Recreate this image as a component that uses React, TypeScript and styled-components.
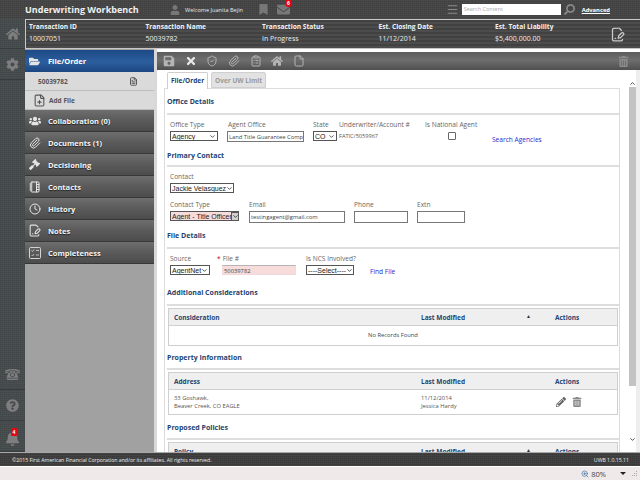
import * as React from "react";
import styled, { createGlobalStyle } from "styled-components";
import {
  FaBell,
  FaBookmark,
  FaCog,
  FaEnvelope,
  FaFolderOpen,
  FaGavel,
  FaHome,
  FaPencilAlt,
  FaQuestionCircle,
  FaSave,
  FaSearch,
  FaTimes,
  FaTrashAlt,
  FaUser,
  FaUsers,
} from "react-icons/fa";
import { GiRotaryPhone } from "react-icons/gi";
import {
  ChevronDown,
  ChevronUp,
  ClipboardList,
  Clock,
  File,
  FilePlus,
  FileSignature,
  FileText,
  Menu,
  NotebookTabs,
  Paperclip,
  ShieldCheck,
  ZoomIn,
} from "lucide-react";

const GlobalStyle = createGlobalStyle`
  html, body {
    margin: 0;
    padding: 0;
    width: 640px;
    height: 480px;
    overflow: hidden;
    background: #fff;
  }
  * {
    box-sizing: border-box;
  }
  body {
    font-family: "Open Sans", "Liberation Sans", sans-serif;
    font-size: 8px;
  }
`;

const dither = `
  repeating-linear-gradient(0deg, rgba(255,255,255,0.035) 0 1px, transparent 1px 2px),
  repeating-linear-gradient(90deg, rgba(0,0,0,0.06) 0 1px, transparent 1px 2px)
`;

const Page = styled.div`
  width: 640px;
  height: 480px;
  display: flex;
  flex-direction: column;
  overflow: hidden;
`;

const TopBar = styled.div`
  height: 19px;
  flex: none;
  display: flex;
  align-items: center;
  padding-left: 25px;
  color: #fff;
  background: ${dither}, #444;
`;

const AppTitle = styled.div`
  font-size: 9px;
  font-weight: 700;
  width: 145px;
  color: #f0f0f0;
`;

const Welcome = styled.div`
  display: flex;
  align-items: center;
  gap: 5px;
  width: 88px;
  font-size: 5.6px;
  color: #e8e8e8;
`;

const TopIcon = styled.div`
  position: relative;
  display: flex;
  width: 19px;
  color: #777;
`;

const MailBadge = styled.span`
  position: absolute;
  left: 8px;
  top: -4px;
  width: 7px;
  height: 8px;
  border-radius: 4px;
  background: #e30613;
  color: #fff;
  font-size: 5px;
  font-weight: 700;
  line-height: 8px;
  text-align: center;
`;

const SearchArea = styled.div`
  margin-left: auto;
  display: flex;
  align-items: center;
  padding-right: 30px;
  color: #888;
`;

const SearchInput = styled.div`
  width: 99px;
  height: 11px;
  margin: 0 3px 0 3px;
  padding-left: 2px;
  background: #fff;
  color: #aaa;
  font-size: 5.5px;
  line-height: 11px;
`;

const MirroredIcon = styled.span`
  display: flex;
  transform: scaleX(-1);
`;

const AdvancedLink = styled.a`
  margin-left: 7px;
  font-size: 5.8px;
  font-weight: 700;
  color: #fff;
  text-decoration: underline;
`;

const Middle = styled.div`
  flex: 1;
  min-height: 0;
  display: flex;
`;

const Rail = styled.div`
  width: 25px;
  flex: none;
  display: flex;
  flex-direction: column;
  background: ${dither}, #454a4c;
`;

const RailButton = styled.div<{ $tall?: boolean; $low?: boolean }>`
  position: relative;
  height: ${(p) => (p.$tall ? 31 : 30)}px;
  padding-top: ${(p) => (p.$low ? 4 : 0)}px;
  flex: none;
  display: flex;
  align-items: center;
  justify-content: center;
  color: #7e7e7e;
  border-bottom: 1px solid #3a3d3f;
`;

const RailSpacer = styled.div`
  flex: 1;
`;

const BellBadge = styled.span`
  position: absolute;
  left: 11px;
  top: 7px;
  width: 6px;
  height: 8px;
  background: #e30613;
  border-radius: 1px;
  color: #fff;
  font-size: 5px;
  font-weight: 700;
  line-height: 8px;
  text-align: center;
`;

const RightColumn = styled.div`
  flex: 1;
  min-width: 0;
  display: flex;
  flex-direction: column;
`;

const TransactionBar = styled.div`
  height: 30px;
  flex: none;
  display: grid;
  grid-template-columns: 116.5px 116.5px 116.5px 116.5px 1fr 30px;
  align-items: center;
  padding-left: 3px;
  color: #eee;
  background: repeating-linear-gradient(0deg, #4c4c4c 0 2px, #414141 2px 4px);
  border: 1px solid #c8c8c8;
  border-right: none;
`;

const TxCell = styled.div`
  display: flex;
  flex-direction: column;
  gap: 4px;
  font-size: 7px;
  line-height: 8px;
  margin-top: -2px;
`;

const TxLabel = styled.div`
  font-size: 6.6px;
  font-weight: 700;
  color: #f2f2f2;
`;

const TxIcon = styled.div`
  display: flex;
  color: #ccc;
`;

const Body = styled.div`
  flex: 1;
  min-height: 0;
  display: flex;
`;

const Sidebar = styled.div`
  width: 129px;
  flex: none;
  padding-top: 1px;
  background: #a1a1a1;
`;

const ActiveNav = styled.div`
  height: 22px;
  display: flex;
  align-items: center;
  padding-left: 3px;
  gap: 7px;
  color: #fff;
  font-size: 7.5px;
  font-weight: 700;
  background: linear-gradient(#1d4a85, #2c5e9e 55%, #1b4680);
`;

const SubRow = styled.div`
  height: 19px;
  display: flex;
  align-items: center;
  background: #dadada;
  border-bottom: 1px solid #bdbdbd;
  color: #555;
  font-size: 6.5px;
  font-weight: 700;
  padding: 0 16px 0 13px;
  justify-content: space-between;
`;

const AddRow = styled(SubRow)`
  justify-content: flex-start;
  gap: 3px;
  padding-left: 8px;
  color: #555;
`;

const NavItem = styled.div`
  height: 22px;
  display: flex;
  align-items: center;
  gap: 7px;
  padding-left: 3px;
  color: #f4f4f4;
  font-size: 7.5px;
  font-weight: 700;
  text-shadow: 0 1px 1px #222;
  background: linear-gradient(#6e6e6e, #5c5c5c 45%, #4c4c4c);
  border-bottom: 1px solid #383838;
`;

const NavIcon = styled.span`
  width: 13px;
  display: flex;
  justify-content: center;
  color: #e4e4e4;
`;

const Main = styled.div`
  flex: 1;
  min-width: 0;
  display: flex;
  flex-direction: column;
  background: #fff;
  border-left: 3px solid #d8d8d8;
`;

const ToolStrip = styled.div`
  margin-top: 3px;
  height: 18px;
  flex: none;
  display: flex;
  align-items: center;
  gap: 9.7px;
  padding: 0 11px 0 6px;
  color: #b4b4b4;
  background: linear-gradient(#5d5d5d, #6e6e6e 45%, #4f4f4f);
`;

const ToolEnd = styled.span`
  margin-left: auto;
  display: flex;
  color: #8a8a8a;
`;

const MainBody = styled.div`
  flex: 1;
  min-height: 0;
  display: flex;
`;

const Form = styled.div`
  flex: 1;
  min-width: 0;
  padding: 2px 9px 0 7px;
  overflow: hidden;
`;

const Tabs = styled.div`
  height: 16px;
  display: flex;
  gap: 3px;
  padding-left: 3px;
  position: relative;
  z-index: 1;
`;

const Tab = styled.div<{ $active?: boolean }>`
  padding: 0 3px;
  height: ${(p) => (p.$active ? 17 : 16)}px;
  font-size: 6.5px;
  font-weight: 700;
  line-height: 15px;
  color: ${(p) => (p.$active ? "#1d3f73" : "#9a9a9a")};
  background: ${(p) => (p.$active ? "#fff" : "#e2e2e2")};
  border: 1px solid #cfcfcf;
  border-bottom: ${(p) => (p.$active ? "none" : "1px solid #cfcfcf")};
  border-radius: 2px 2px 0 0;
`;

const Panel = styled.div`
  border: 1px solid #dcdcdc;
  border-bottom: none;
  padding: 7px 0 0 2px;
`;

const SectionTitle = styled.div`
  height: 12px;
  font-size: 7px;
  font-weight: 700;
  line-height: 12px;
  color: #24446f;
`;

const SectionRule = styled.div<{ $gap: number }>`
  height: 2px;
  margin-top: ${(p) => p.$gap}px;
  background: #dedede;
`;

const FieldRow = styled.div<{ $h: number; $mt?: number }>`
  height: ${(p) => p.$h}px;
  margin-top: ${(p) => p.$mt ?? 0}px;
  display: flex;
  align-items: flex-start;
  padding-left: 3px;
`;

const Field = styled.div<{ $w: number }>`
  width: ${(p) => p.$w}px;
  flex: none;
  display: flex;
  flex-direction: column;
  gap: 2px;
`;

const Label = styled.div`
  height: 9px;
  font-size: 6.6px;
  line-height: 9px;
  color: #666;
  white-space: nowrap;
`;

const Required = styled.span`
  color: #d00;
  margin-right: 2px;
`;

const Select = styled.div<{ $w: number; $pink?: boolean }>`
  width: ${(p) => p.$w}px;
  height: 10px;
  display: flex;
  align-items: center;
  justify-content: space-between;
  padding: 0 1px 0 1px;
  font-family: "Liberation Sans", Arial, sans-serif;
  font-size: 7px;
  color: #222;
  white-space: nowrap;
  overflow: hidden;
  background: ${(p) => (p.$pink ? "#f8dcdc" : "#fff")};
  border: 1px solid #555;

  svg {
    flex: none;
    ${(p) => (p.$pink ? "background: #d0d0d0; outline: 1px solid #555;" : "")}
  }
`;

const Input = styled.div<{ $w: number; $pink?: boolean; $h?: number; $indent?: number }>`
  width: ${(p) => p.$w}px;
  height: ${(p) => p.$h ?? 12}px;
  margin-left: ${(p) => p.$indent ?? 0}px;
  padding-left: 1px;
  font-size: 5.8px;
  line-height: 10px;
  color: #444;
  white-space: nowrap;
  overflow: hidden;
  background: ${(p) => (p.$pink ? "#f8dcdc" : "#fff")};
  border: 1px solid ${(p) => (p.$pink ? "#f0d8d8" : "#777")};
  border-top-color: ${(p) => (p.$pink ? "#b5b5b5" : "#777")};
`;

const PlainValue = styled.div`
  font-size: 5.6px;
  line-height: 10px;
  color: #555;
`;

const Check = styled.div`
  width: 8px;
  height: 8px;
  margin: 1px 0 0 23px;
  border: 1px solid #666;
  border-radius: 1px;
  background: #fff;
`;

const LinkText = styled.a<{ $mt: number }>`
  margin-top: ${(p) => p.$mt}px;
  font-size: 6.6px;
  line-height: 9px;
  color: #2a2ad0;
  white-space: nowrap;
`;

const Table = styled.div`
  margin: 2px 0 0 1px;
  width: 450px;
  border: 1px solid #cfcfcf;
`;

const TableHead = styled.div`
  height: 17px;
  display: grid;
  grid-template-columns: 247px 134px 1fr;
  align-items: center;
  padding-left: 5px;
  background: #efefef;
  border-bottom: 1px solid #cfcfcf;
  font-size: 6.5px;
  font-weight: 700;
  color: #24446f;
`;

const SortCell = styled.div`
  display: flex;
  justify-content: space-between;
  padding-right: 24px;
`;

const TableRow = styled.div`
  height: 24px;
  display: grid;
  grid-template-columns: 247px 134px 1fr;
  align-items: center;
  padding-left: 5px;
  font-size: 5.8px;
  line-height: 8.5px;
  color: #555;
`;

const EmptyRow = styled.div`
  height: 19px;
  text-align: center;
  font-size: 5.8px;
  line-height: 19px;
  color: #444;
`;

const Actions = styled.div`
  display: flex;
  align-items: center;
  gap: 6px;
  color: #666;
  margin-left: 1px;
`;

const TableGap = styled.div<{ $h: number }>`
  height: ${(p) => p.$h}px;
`;

const ScrollTrack = styled.div`
  width: 11px;
  flex: none;
  display: flex;
  flex-direction: column;
  align-items: flex-start;
  background: #fff;
  border-right: 4px solid #eeeeee;
`;

const ScrollCap = styled.div`
  height: 17px;
  flex: none;
  display: flex;
  align-items: flex-end;
  justify-content: center;
  width: 7px;
  color: #333;
`;

const ScrollThumb = styled.div`
  width: 7px;
  height: 299px;
  flex: none;
  background: #c3c3c3;
`;

const ScrollRest = styled.div`
  flex: 1;
  width: 7px;
  display: flex;
  align-items: flex-end;
  justify-content: center;
  padding-bottom: 9px;
  color: #333;
`;

const Footer = styled.div`
  height: 14px;
  flex: none;
  display: flex;
  align-items: center;
  justify-content: space-between;
  padding: 0 11px 0 12px;
  color: #eee;
  font-size: 5.2px;
  background: ${dither}, #3d3d3d;
  border-top: 1px solid #a8a8a8;
`;

const StatusBar = styled.div`
  height: 14px;
  flex: none;
  display: flex;
  align-items: center;
  justify-content: flex-end;
  padding-right: 2px;
  gap: 2px;
  color: #444;
  font-size: 7.5px;
  background: #f0e9e9;
  border-top: 1px solid #fff;
`;

const ZoomCaret = styled.span`
  width: 0;
  height: 0;
  margin: 0 4px 0 12px;
  border-left: 3px solid transparent;
  border-right: 3px solid transparent;
  border-top: 3px solid #222;
`;

const SortCaret = styled.span`
  font-size: 5px;
  color: #333;
`;

const CompletenessIcon = () => (
  <svg width="12" height="12" viewBox="0 0 12 12" fill="none" stroke="#d4d4d4">
    <rect x="0.5" y="0.5" width="11" height="11" rx="1" />
    <path d="M2.5 3.5l1 1 1.5-2M2.5 8l1 1 1.5-2M7 3.5h3M7 8h3" strokeWidth="0.8" />
  </svg>
);

const ResizeGrip = () => (
  <svg width="6" height="6" viewBox="0 0 6 6" fill="#aaa">
    <rect x="4" y="0" width="1" height="1" />
    <rect x="2" y="2" width="1" height="1" />
    <rect x="4" y="2" width="1" height="1" />
    <rect x="0" y="4" width="1" height="1" />
    <rect x="2" y="4" width="1" height="1" />
    <rect x="4" y="4" width="1" height="1" />
  </svg>
);

const navItems: { label: string; icon: React.ReactNode }[] = [
  { label: "Collaboration (0)", icon: <FaUsers size={12} /> },
  { label: "Documents (1)", icon: <Paperclip size={12} /> },
  { label: "Decisioning", icon: <FaGavel size={11} /> },
  { label: "Contacts", icon: <NotebookTabs size={12} /> },
  { label: "History", icon: <Clock size={12} /> },
  { label: "Notes", icon: <FileSignature size={13} /> },
  { label: "Completeness", icon: <CompletenessIcon /> },
];

const transaction = [
  { label: "Transaction ID", value: "10007051" },
  { label: "Transaction Name", value: "50039782" },
  { label: "Transaction Status", value: "In Progress" },
  { label: "Est. Closing Date", value: "11/12/2014" },
  { label: "Est. Total Liability", value: "$5,400,000.00" },
];

const Caret = () => <ChevronDown size={7} strokeWidth={2.5} />;

export default function App() {
  return (
    <Page>
      <GlobalStyle />
      <TopBar>
        <AppTitle>Underwriting Workbench</AppTitle>
        <Welcome>
          <FaUser size={10} color="#777" />
          Welcome Juanita Bejin
        </Welcome>
        <TopIcon>
          <FaBookmark size={11} />
        </TopIcon>
        <TopIcon>
          <FaEnvelope size={13} />
          <MailBadge>6</MailBadge>
        </TopIcon>
        <SearchArea>
          <Menu size={13} />
          <SearchInput>Search Content</SearchInput>
          <MirroredIcon>
            <FaSearch size={11} />
          </MirroredIcon>
          <AdvancedLink>Advanced</AdvancedLink>
        </SearchArea>
      </TopBar>
      <Middle>
        <Rail>
          <RailButton>
            <FaHome size={14} />
          </RailButton>
          <RailButton $tall>
            <FaCog size={13} />
          </RailButton>
          <RailSpacer />
          <RailButton $tall>
            <GiRotaryPhone size={17} />
          </RailButton>
          <RailButton $tall>
            <FaQuestionCircle size={13} />
          </RailButton>
          <RailButton $tall $low>
            <FaBell size={15} />
            <BellBadge>4</BellBadge>
          </RailButton>
        </Rail>
        <RightColumn>
          <TransactionBar>
            {transaction.map((t) => (
              <TxCell key={t.label}>
                <TxLabel>{t.label}</TxLabel>
                <div>{t.value}</div>
              </TxCell>
            ))}
            <TxIcon>
              <FileSignature size={15} />
            </TxIcon>
          </TransactionBar>
          <Body>
            <Sidebar>
              <ActiveNav>
                <NavIcon>
                  <FaFolderOpen size={11} />
                </NavIcon>
                File/Order
              </ActiveNav>
              <SubRow>
                50039782
                <FileText size={9} color="#333" />
              </SubRow>
              <AddRow>
                <FilePlus size={13} color="#555" />
                Add File
              </AddRow>
              {navItems.map((n) => (
                <NavItem key={n.label}>
                  <NavIcon>{n.icon}</NavIcon>
                  {n.label}
                </NavItem>
              ))}
            </Sidebar>
            <Main>
              <ToolStrip>
                <FaSave size={12} />
                <FaTimes size={12} color="#e8e8e8" />
                <ShieldCheck size={12} />
                <Paperclip size={12} />
                <ClipboardList size={12} />
                <FaHome size={12} />
                <File size={12} />
                <ToolEnd>
                  <FaTrashAlt size={11} />
                </ToolEnd>
              </ToolStrip>
              <MainBody>
                <Form>
                  <Tabs>
                    <Tab $active>File/Order</Tab>
                    <Tab>Over UW Limit</Tab>
                  </Tabs>
                  <Panel>
                    <SectionTitle>Office Details</SectionTitle>
                    <SectionRule $gap={5} />
                    <FieldRow $h={30} $mt={5}>
                      <Field $w={58}>
                        <Label>Office Type</Label>
                        <Select $w={48}>
                          Agency
                          <Caret />
                        </Select>
                      </Field>
                      <Field $w={85}>
                        <Label>Agent Office</Label>
                        <Input $w={77} $h={11} $indent={-1}>
                          Land Title Guarantee Comp
                        </Input>
                      </Field>
                      <Field $w={26}>
                        <Label>State</Label>
                        <Select $w={24}>
                          CO
                          <Caret />
                        </Select>
                      </Field>
                      <Field $w={86}>
                        <Label>Underwriter/Account #</Label>
                        <PlainValue>FATIC/5059967</PlainValue>
                      </Field>
                      <Field $w={67}>
                        <Label>Is National Agent</Label>
                        <Check />
                      </Field>
                      <LinkText $mt={15}>Search Agencies</LinkText>
                    </FieldRow>
                    <SectionTitle>Primary Contact</SectionTitle>
                    <SectionRule $gap={3} />
                    <FieldRow $h={28} $mt={5}>
                      <Field $w={80}>
                        <Label>Contact</Label>
                        <Select $w={64}>
                          Jackie Velasquez
                          <Caret />
                        </Select>
                      </Field>
                    </FieldRow>
                    <FieldRow $h={30}>
                      <Field $w={79}>
                        <Label>Contact Type</Label>
                        <Select $w={69} $pink>
                          Agent - Title Officer
                          <Caret />
                        </Select>
                      </Field>
                      <Field $w={105}>
                        <Label>Email</Label>
                        <Input $w={96}>testingagent@gmail.com</Input>
                      </Field>
                      <Field $w={63}>
                        <Label>Phone</Label>
                        <Input $w={54} />
                      </Field>
                      <Field $w={48}>
                        <Label>Extn</Label>
                        <Input $w={48} />
                      </Field>
                    </FieldRow>
                    <SectionTitle>File Details</SectionTitle>
                    <SectionRule $gap={5} />
                    <FieldRow $h={33} $mt={5}>
                      <Field $w={47}>
                        <Label>Source</Label>
                        <Select $w={40}>
                          AgentNet
                          <Caret />
                        </Select>
                      </Field>
                      <Field $w={89}>
                        <Label>
                          <Required>*</Required>File #
                        </Label>
                        <Input $w={74} $h={10} $pink $indent={5}>
                          50039782
                        </Input>
                      </Field>
                      <Field $w={64}>
                        <Label>Is NCS Involved?</Label>
                        <Select $w={48}>
                          ----Select----
                          <Caret />
                        </Select>
                      </Field>
                      <LinkText $mt={13}>Find File</LinkText>
                    </FieldRow>
                    <SectionTitle>Additional Considerations</SectionTitle>
                    <SectionRule $gap={5} />
                    <Table>
                      <TableHead>
                        <div>Consideration</div>
                        <SortCell>
                          Last Modified
                          <SortCaret>▲</SortCaret>
                        </SortCell>
                        <div>Actions</div>
                      </TableHead>
                      <EmptyRow>No Records Found</EmptyRow>
                    </Table>
                    <TableGap $h={6} />
                    <SectionTitle>Property Information</SectionTitle>
                    <SectionRule $gap={4} />
                    <Table>
                      <TableHead>
                        <div>Address</div>
                        <div>Last Modified</div>
                        <div>Actions</div>
                      </TableHead>
                      <TableRow>
                        <div>
                          33 Goshawk,
                          <br />
                          Beaver Creek, CO EAGLE
                        </div>
                        <div>
                          11/12/2014
                          <br />
                          Jessica Hardy
                        </div>
                        <Actions>
                          <FaPencilAlt size={10} />
                          <FaTrashAlt size={10} color="#888" />
                        </Actions>
                      </TableRow>
                    </Table>
                    <TableGap $h={7} />
                    <SectionTitle>Proposed Policies</SectionTitle>
                    <SectionRule $gap={4} />
                    <Table>
                      <TableHead>
                        <div>Policy</div>
                        <SortCell>
                          Last Modified
                          <SortCaret>▲</SortCaret>
                        </SortCell>
                        <div>Actions</div>
                      </TableHead>
                    </Table>
                  </Panel>
                </Form>
                <ScrollTrack>
                  <ScrollCap>
                    <ChevronUp size={7} strokeWidth={3} />
                  </ScrollCap>
                  <ScrollThumb />
                  <ScrollRest>
                    <ChevronDown size={7} strokeWidth={3} />
                  </ScrollRest>
                </ScrollTrack>
              </MainBody>
            </Main>
          </Body>
        </RightColumn>
      </Middle>
      <Footer>
        <span>©2015 First American Financial Corporation and/or its affiliates. All rights reserved.</span>
        <span>UWB 1.0.15.11</span>
      </Footer>
      <StatusBar>
        <ZoomIn size={8} color="#3a6ea5" />
        80%
        <ZoomCaret />
        <ResizeGrip />
      </StatusBar>
    </Page>
  );
}
